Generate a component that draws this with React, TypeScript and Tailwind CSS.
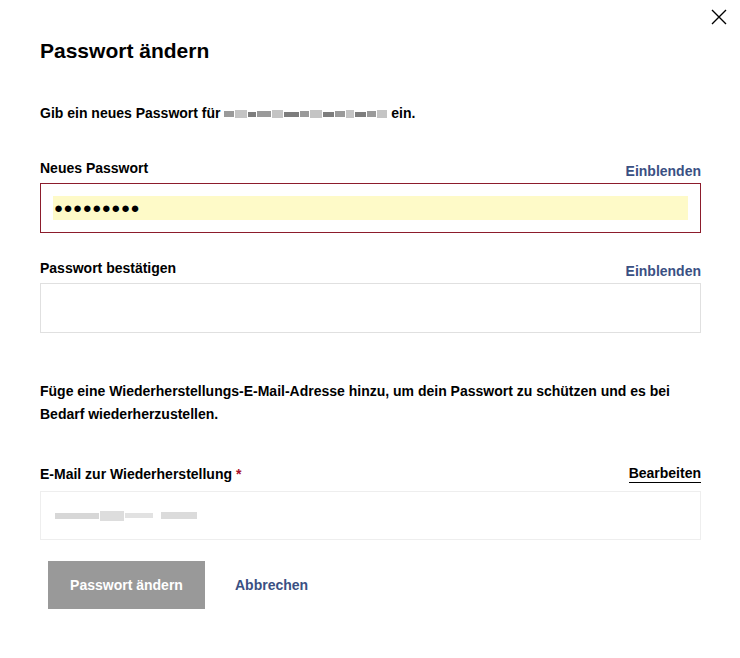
import React from "react";

function FieldHeader({ label, action, underline, required }: { label: string; action: string; underline?: boolean; required?: boolean }) {
	return (
		<div className={underline ? "flex items-end justify-between mb-[8px]" : "flex items-end justify-between mb-[6px]"}>
			<span className="text-[14px] font-bold leading-[18px] text-black">
				{label}
				{required && <span className="text-[#a8102a]"> *</span>}
			</span>
			<span
				className={
					underline
						? "text-[14px] font-bold leading-[18px] text-black border-b border-black"
						: "text-[14px] font-bold leading-[18px] text-[#3a5083] translate-y-[3px]"
				}
			>
				{action}
			</span>
		</div>
	);
}

function Blur({ widths }: { widths: number[] }) {
	return (
		<span className="inline-flex items-center align-middle gap-[1px]">
			{widths.map((w, i) => (
				<span
					key={i}
					className={i % 3 === 0 ? "h-[6px] bg-[#9a9a9a]" : i % 3 === 1 ? "h-[8px] bg-[#c4c4c4]" : "h-[5px] bg-[#7d7d7d]"}
					style={{ width: w }}
				/>
			))}
		</span>
	);
}

export default function App() {
	return (
		<div className="relative w-[740px] h-[658px] bg-white" style={{ fontFamily: '"Liberation Sans", Arial, sans-serif' }}>
			<button className="absolute right-[13px] top-[9px] w-[16px] h-[16px] text-black">
				<svg viewBox="0 0 16 16" className="w-[16px] h-[16px]" fill="none" stroke="currentColor" strokeWidth="1.4">
					<path d="M1 1 L15 15 M15 1 L1 15" />
				</svg>
			</button>
			<div className="pl-[40px] pr-[39px] pt-[38px]">
				<h1 className="text-[21px] font-bold leading-[26px] text-black">Passwort ändern</h1>
				<p className="mt-[40px] text-[14px] font-bold leading-[18px] text-black">
					Gib ein neues Passwort für <Blur widths={[10, 12, 8, 14, 11, 15, 9, 12, 11, 10, 8, 11, 9, 10]} /> ein.
				</p>

				<div className="mt-[37px]">
					<FieldHeader label="Neues Passwort" action="Einblenden" />
					<div className="h-[50px] border border-[#8c1c2c] flex items-center px-[12px]">
						<div className="w-full h-[24px] bg-[#fefac8] flex items-center text-[15px] tracking-[0.5px] text-black pl-[1px]">
							●●●●●●●●●
						</div>
					</div>
				</div>

				<div className="mt-[26px]">
					<FieldHeader label="Passwort bestätigen" action="Einblenden" />
					<div className="h-[50px] border border-[#e0e0e0]" />
				</div>

				<p className="mt-[47px] text-[14px] font-bold leading-[23px] text-black">
					Füge eine Wiederherstellungs-E-Mail-Adresse hinzu, um dein Passwort zu schützen und es bei Bedarf wiederherzustellen.
				</p>

				<div className="mt-[38px]">
					<FieldHeader label="E-Mail zur Wiederherstellung" action="Bearbeiten" underline required />
					<div className="h-[49px] border border-[#eeeeee] flex items-center px-[14px]">
						<span className="inline-flex items-center gap-[1px] opacity-60">
							<span className="w-[44px] h-[6px] bg-[#bdbdbd]" />
							<span className="w-[24px] h-[10px] bg-[#c8c8c8]" />
							<span className="w-[28px] h-[5px] bg-[#cfcfcf]" />
							<span className="w-[6px]" />
							<span className="w-[36px] h-[7px] bg-[#c4c4c4]" />
						</span>
					</div>
				</div>

				<div className="mt-[21px] flex items-center pl-[8px]">
					<button className="w-[157px] h-[48px] bg-[#999999] text-white text-[14px] font-bold">Passwort ändern</button>
					<button className="ml-[30px] text-[14px] font-bold text-[#3a5083]">Abbrechen</button>
				</div>
			</div>
		</div>
	);
}
